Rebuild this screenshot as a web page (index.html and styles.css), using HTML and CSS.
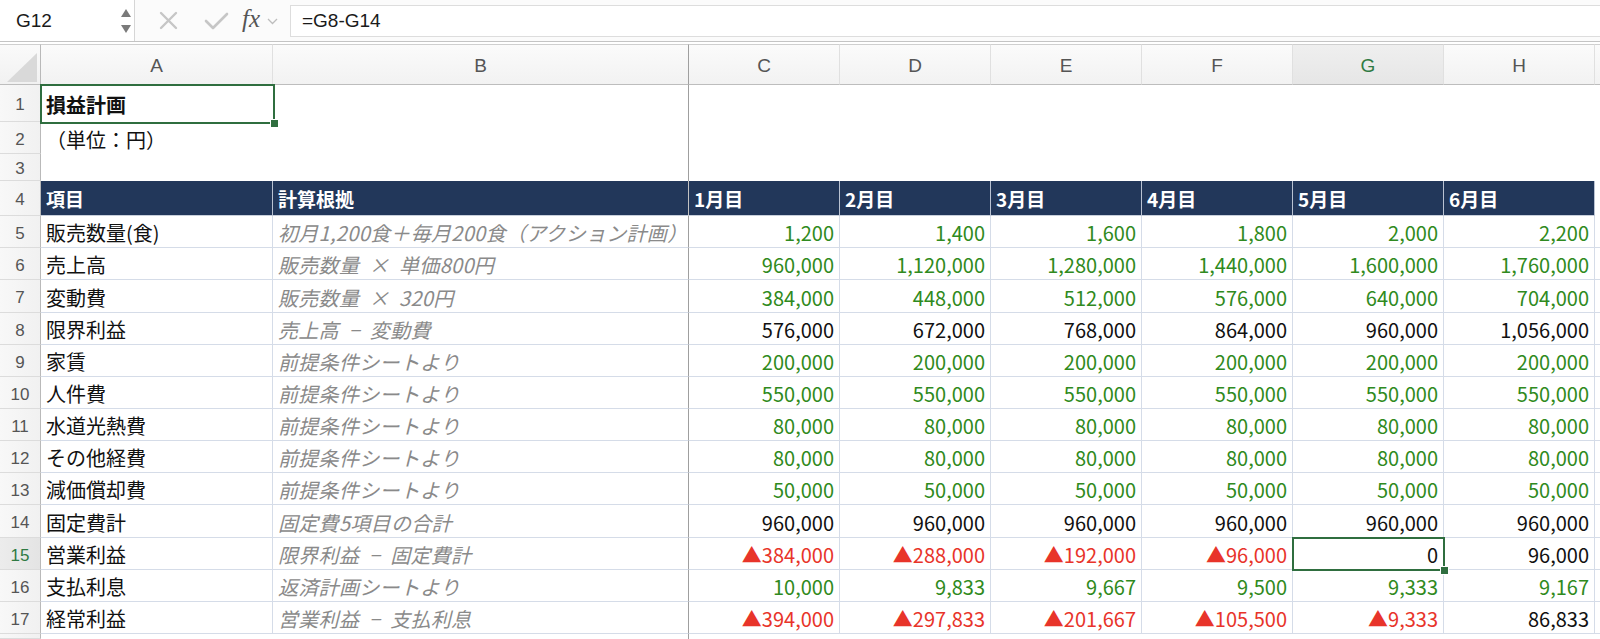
FILE: index.html
```html
<!DOCTYPE html>
<html lang="ja">
<head>
<meta charset="utf-8">
<title>損益計画</title>
<link rel="stylesheet" href="styles.css">
</head>
<body>
<div class="toolbar">
  <div class="namebox">
    <span class="ref">G12</span>
    <svg class="stepper" width="12" height="28" viewBox="0 0 12 28"><polygon points="1,10 11,10 6,2" fill="#7a7a7a"/><polygon points="1,18 11,18 6,26" fill="#7a7a7a"/></svg>
  </div>
  <div class="fxbar">
    <svg class="ico-x" width="19" height="19" viewBox="0 0 19 19"><path d="M2 2 L17 17 M17 2 L2 17" stroke="#c6c6c6" stroke-width="2.4" fill="none" stroke-linecap="round"/></svg>
    <svg class="ico-ok" width="25" height="18" viewBox="0 0 25 18"><path d="M2 9 L9 16 L23 2" stroke="#c6c6c6" stroke-width="2.6" fill="none" stroke-linecap="round" stroke-linejoin="round"/></svg>
    <span class="fx">fx</span>
    <svg class="ico-chev" width="11" height="7" viewBox="0 0 11 7"><path d="M1 1 L5.5 5.5 L10 1" stroke="#bdbdbd" stroke-width="1.3" fill="none"/></svg>
  </div>
  <div class="formula">=G8-G14</div>
</div>

<div class="sheet">
  <!-- column headers -->
  <div class="corner"><svg width="41" height="40" viewBox="0 0 41 40"><polygon points="7,37 37,37 37,8" fill="#d9d9d9"/></svg></div>
  <div class="ch">A</div>
  <div class="ch frz">B</div>
  <div class="ch">C</div>
  <div class="ch">D</div>
  <div class="ch">E</div>
  <div class="ch">F</div>
  <div class="ch hl">G</div>
  <div class="ch">H</div>
  <div class="ch"></div>

  <!-- row 1 -->
  <div class="rh">1</div>
  <div class="c title sel">損益計画</div>
  <div class="c frz"></div>
  <div class="c"></div><div class="c"></div><div class="c"></div><div class="c"></div><div class="c"></div><div class="c"></div><div class="c"></div>

  <!-- row 2 -->
  <div class="rh">2</div>
  <div class="c">（単位：円）</div>
  <div class="c frz"></div>
  <div class="c"></div><div class="c"></div><div class="c"></div><div class="c"></div><div class="c"></div><div class="c"></div><div class="c"></div>

  <!-- row 3 -->
  <div class="rh">3</div>
  <div class="c"></div>
  <div class="c frz"></div>
  <div class="c"></div><div class="c"></div><div class="c"></div><div class="c"></div><div class="c"></div><div class="c"></div><div class="c"></div>

  <!-- row 4 -->
  <div class="rh">4</div>
  <div class="c hd">項目</div>
  <div class="c hd frz">計算根拠</div>
  <div class="c hd">1月目</div>
  <div class="c hd">2月目</div>
  <div class="c hd">3月目</div>
  <div class="c hd">4月目</div>
  <div class="c hd">5月目</div>
  <div class="c hd">6月目</div>
  <div class="c"></div>

  <!-- row 5 -->
  <div class="rh">5</div>
  <div class="c t">販売数量(食)</div>
  <div class="c t note frz">初月1,200食＋毎月200食（アクション計画）</div>
  <div class="c t n g">1,200</div><div class="c t n g">1,400</div><div class="c t n g">1,600</div><div class="c t n g">1,800</div><div class="c t n g">2,000</div><div class="c t n g">2,200</div>
  <div class="c t"></div>

  <!-- row 6 -->
  <div class="rh">6</div>
  <div class="c t">売上高</div>
  <div class="c t note frz">販売数量 × 単価800円</div>
  <div class="c t n g">960,000</div><div class="c t n g">1,120,000</div><div class="c t n g">1,280,000</div><div class="c t n g">1,440,000</div><div class="c t n g">1,600,000</div><div class="c t n g">1,760,000</div>
  <div class="c t"></div>

  <!-- row 7 -->
  <div class="rh">7</div>
  <div class="c t">変動費</div>
  <div class="c t note frz">販売数量 × 320円</div>
  <div class="c t n g">384,000</div><div class="c t n g">448,000</div><div class="c t n g">512,000</div><div class="c t n g">576,000</div><div class="c t n g">640,000</div><div class="c t n g">704,000</div>
  <div class="c t"></div>

  <!-- row 8 -->
  <div class="rh">8</div>
  <div class="c t">限界利益</div>
  <div class="c t note frz">売上高 − 変動費</div>
  <div class="c t n">576,000</div><div class="c t n">672,000</div><div class="c t n">768,000</div><div class="c t n">864,000</div><div class="c t n">960,000</div><div class="c t n">1,056,000</div>
  <div class="c t"></div>

  <!-- row 9 -->
  <div class="rh">9</div>
  <div class="c t">家賃</div>
  <div class="c t note frz">前提条件シートより</div>
  <div class="c t n g">200,000</div><div class="c t n g">200,000</div><div class="c t n g">200,000</div><div class="c t n g">200,000</div><div class="c t n g">200,000</div><div class="c t n g">200,000</div>
  <div class="c t"></div>

  <!-- row 10 -->
  <div class="rh">10</div>
  <div class="c t">人件費</div>
  <div class="c t note frz">前提条件シートより</div>
  <div class="c t n g">550,000</div><div class="c t n g">550,000</div><div class="c t n g">550,000</div><div class="c t n g">550,000</div><div class="c t n g">550,000</div><div class="c t n g">550,000</div>
  <div class="c t"></div>

  <!-- row 11 -->
  <div class="rh">11</div>
  <div class="c t">水道光熱費</div>
  <div class="c t note frz">前提条件シートより</div>
  <div class="c t n g">80,000</div><div class="c t n g">80,000</div><div class="c t n g">80,000</div><div class="c t n g">80,000</div><div class="c t n g">80,000</div><div class="c t n g">80,000</div>
  <div class="c t"></div>

  <!-- row 12 -->
  <div class="rh">12</div>
  <div class="c t">その他経費</div>
  <div class="c t note frz">前提条件シートより</div>
  <div class="c t n g">80,000</div><div class="c t n g">80,000</div><div class="c t n g">80,000</div><div class="c t n g">80,000</div><div class="c t n g">80,000</div><div class="c t n g">80,000</div>
  <div class="c t"></div>

  <!-- row 13 -->
  <div class="rh">13</div>
  <div class="c t">減価償却費</div>
  <div class="c t note frz">前提条件シートより</div>
  <div class="c t n g">50,000</div><div class="c t n g">50,000</div><div class="c t n g">50,000</div><div class="c t n g">50,000</div><div class="c t n g">50,000</div><div class="c t n g">50,000</div>
  <div class="c t"></div>

  <!-- row 14 -->
  <div class="rh">14</div>
  <div class="c t">固定費計</div>
  <div class="c t note frz">固定費5項目の合計</div>
  <div class="c t n">960,000</div><div class="c t n">960,000</div><div class="c t n">960,000</div><div class="c t n">960,000</div><div class="c t n">960,000</div><div class="c t n">960,000</div>
  <div class="c t"></div>

  <!-- row 15 -->
  <div class="rh hl">15</div>
  <div class="c t">営業利益</div>
  <div class="c t note frz">限界利益 − 固定費計</div>
  <div class="c t n r">▲384,000</div><div class="c t n r">▲288,000</div><div class="c t n r">▲192,000</div><div class="c t n r">▲96,000</div><div class="c t n sel">0</div><div class="c t n">96,000</div>
  <div class="c t"></div>

  <!-- row 16 -->
  <div class="rh">16</div>
  <div class="c t">支払利息</div>
  <div class="c t note frz">返済計画シートより</div>
  <div class="c t n g">10,000</div><div class="c t n g">9,833</div><div class="c t n g">9,667</div><div class="c t n g">9,500</div><div class="c t n g">9,333</div><div class="c t n g">9,167</div>
  <div class="c t"></div>

  <!-- row 17 -->
  <div class="rh">17</div>
  <div class="c t">経常利益</div>
  <div class="c t note frz">営業利益 − 支払利息</div>
  <div class="c t n r">▲394,000</div><div class="c t n r">▲297,833</div><div class="c t n r">▲201,667</div><div class="c t n r">▲105,500</div><div class="c t n r">▲9,333</div><div class="c t n">86,833</div>
  <div class="c t"></div>

  <!-- row 18 (cut) -->
  <div class="rh"></div>
  <div class="c"></div>
  <div class="c frz"></div>
  <div class="c"></div><div class="c"></div><div class="c"></div><div class="c"></div><div class="c"></div><div class="c"></div><div class="c"></div>
</div>
</body>
</html>
```

FILE: styles.css
```css
html, body {
  margin: 0;
  padding: 0;
  background: #ffffff;
}
body {
  width: 1600px;
  height: 639px;
  overflow: hidden;
  font-family: "Noto Sans CJK JP", "Noto Sans", sans-serif;
}

/* ---------- toolbar ---------- */
.toolbar {
  display: flex;
  height: 41px;
  border-bottom: 1px solid #c4c4c4;
  background: #fbfbfb;
}
.namebox {
  width: 135px;
  box-sizing: border-box;
  background: #ffffff;
  border-right: 1px solid #d6d6d6;
  display: flex;
  align-items: center;
  padding-left: 16px;
  padding-right: 2px;
}
.ref {
  font-family: "Liberation Sans", Arial, sans-serif;
  font-size: 19px;
  color: #1a1a1a;
}
.stepper {
  margin-left: auto;
}
.fxbar {
  width: 155px;
  display: flex;
  align-items: center;
  box-sizing: border-box;
  padding-left: 24px;
}
.ico-x { margin-right: 26px; }
.ico-ok { margin-right: 13px; }
.fx {
  font-family: "Liberation Serif", "DejaVu Serif", serif;
  font-style: italic;
  font-size: 25px;
  color: #555555;
  margin-right: 7px;
  margin-top: -3px;
}
.ico-chev { margin-top: 2px; }
.formula {
  flex: 1;
  margin: 5px 0 4px 0;
  background: #ffffff;
  border: 1px solid #dddddd;
  border-right: none;
  display: flex;
  align-items: center;
  padding-left: 11px;
  font-family: "Liberation Sans", Arial, sans-serif;
  font-size: 19px;
  color: #1a1a1a;
}

/* ---------- sheet grid ---------- */
.sheet {
  margin-top: 2px;
  display: grid;
  grid-template-columns: 41px 232px 416px repeat(6, 151px) 1fr;
  grid-template-rows: 41px 37px 32px 27px 35px 32px 32px 33px 32px 32px 32px 32px 32px 32px 33px 32px 32px 32px 5px;
}
.sheet > div {
  box-sizing: border-box;
  min-width: 0;
}

.corner {
  background: linear-gradient(#fafafa, #f1f1f1);
  border-top: 1px solid #cfcfcf;
  border-right: 1px solid #b9b9b9;
  border-bottom: 1px solid #bdbdbd;
}
.corner svg { display: block; }

.ch {
  background: linear-gradient(#fbfbfb, #f2f2f2);
  border-top: 1px solid #cfcfcf;
  border-right: 1px solid #e0e0e0;
  border-bottom: 1px solid #bdbdbd;
  display: flex;
  align-items: center;
  justify-content: center;
  padding-top: 3px;
  font-family: "Liberation Sans", Arial, sans-serif;
  font-size: 19px;
  color: #555555;
}
.ch.hl {
  background: linear-gradient(#efefef, #e6e6e6);
  color: #2f7a43;
}

.rh {
  background: linear-gradient(90deg, #f8f8f8, #f1f1f1);
  border-right: 1px solid #b9b9b9;
  border-bottom: 1px solid #dcdcdc;
  display: flex;
  align-items: center;
  justify-content: center;
  padding-top: 4px;
  font-family: "Liberation Sans", Arial, sans-serif;
  font-size: 17px;
  color: #555555;
}
.rh.hl {
  background: linear-gradient(90deg, #ececec, #e4e4e4);
  color: #2f7a43;
}

.c {
  display: flex;
  align-items: center;
  padding: 2px 5px 0 5px;
  font-size: 20px;
  color: #111111;
  white-space: pre;
}
.c.t {
  border-right: 1px solid #d5dce8;
  border-bottom: 1px solid #d5dce8;
}
.c.frz,
.ch.frz {
  border-right: 1px solid #9f9f9f;
}
.title {
  font-weight: 700;
}
.hd {
  background: #22375a;
  color: #ffffff;
  font-weight: 700;
  font-size: 19px;
  border-right: 1px solid #b9c2d2;
  border-bottom: 1px solid #c8cfdb;
  padding-top: 0;
}
.hd.frz {
  border-right: 1px solid #c2c2c2;
}
.note {
  font-style: italic;
  color: #8a8a8a;
  overflow: hidden;
  word-spacing: 5px;
  letter-spacing: 0.3px;
}
.n {
  justify-content: flex-end;
}
.g { color: #2f8a20; }
.r { color: #e8342a; }

/* selection boxes */
.sel {
  position: relative;
  z-index: 2;
}
.sel::before {
  content: "";
  position: absolute;
  top: -1px;
  left: -1px;
  right: -2px;
  bottom: -2px;
  border: 2px solid #2f6e3f;
  pointer-events: none;
}
.sel::after {
  content: "";
  position: absolute;
  right: -6px;
  bottom: -6px;
  width: 7px;
  height: 7px;
  background: #2f6e3f;
  border: 1px solid #ffffff;
}
```
